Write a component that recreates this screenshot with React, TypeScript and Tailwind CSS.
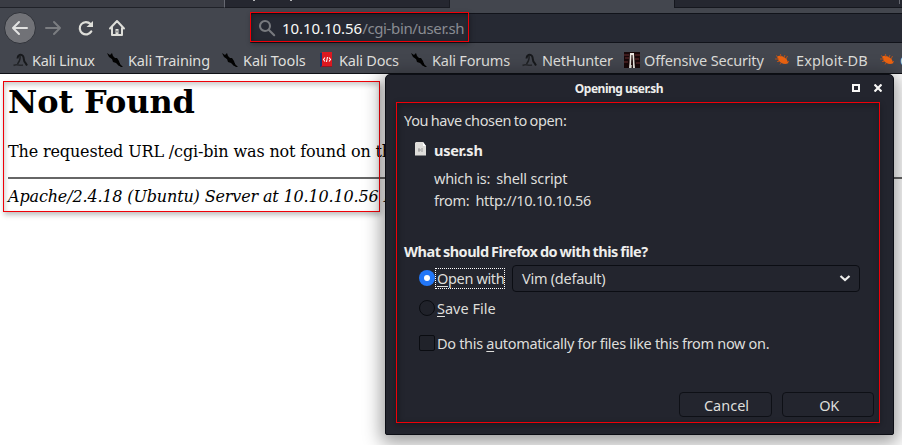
import React from "react";

const sans = "font-['Noto_Sans',sans-serif]";

function Dragon() {
  return (
    <svg className="block h-4 w-4" viewBox="0 0 16 16" fill="none">
      <path d="M4.5 6.5C4.5 3 8 1.500 10 4C11.500 6.500 10 9 12.500 11L14 13.500" stroke="#17191c" strokeWidth="2" />
      <path d="M7 3.500C7.500 7 6.500 9.500 4.500 12" stroke="#1e2023" strokeWidth="1.500" />
      <path d="M.5 13.500C4 11.500 6 14 10 13" stroke="#26282c" strokeWidth="1.500" />
    </svg>
  );
}
function Blade() {
  return (
    <svg className="block h-4 w-4" viewBox="0 0 16 16" fill="#020202">
      <path d="M0 1 3 3 5 1 6 4 8 6 10 6 12 9 13 12 16 15 14 15 11 13 9 11 6 10 5 7 2 5Z" />
      <path d="M10 11h3v3h-1ZM3 4h2v3Z" />
    </svg>
  );
}
function Docs() {
  return (
    <svg className="block h-4 w-4" viewBox="0 0 16 16">
      <path fill="#15346d" d="M1 1h2v14H1Z" />
      <path fill="#dc1820" d="M3 0h10v14H3Z" />
      <path fill="#8b1724" d="M2 14h11v1H2Z" />
      <path d="M6 5.500 4.500 7.500 6 9.500M10 5.500l1.500 2L10 9.500M8.500 5 7.500 10" stroke="#fff" strokeWidth="1.100" fill="none" />
    </svg>
  );
}
function Offensive() {
  return (
    <svg className="block h-4 w-4" viewBox="0 0 16 16">
      <path fill="#170708" d="M0 0h16v16H0Z" />
      <path stroke="#6b3033" d="M0 3h5M11 3h5M1 6h4M11 7h4M0 10h4M12 11h4" />
      <path fill="#e9e5df" d="M6 1h4l.5 10 .5 5H9L8.500 5 7.500 16H5l.5-5Z" />
      <path fill="#241010" d="M7.500 3h1l.5 10H7Z" />
    </svg>
  );
}
function Bug() {
  return (
    <svg className="block h-4 w-4" viewBox="0 0 16 16">
      <path fill="#ed6411" d="M2 4.500C5 2.500 9 4.500 11.500 7L13.500 11C10 13 6 11.500 3.500 8.500Z" />
      <path stroke="#b5521d" fill="none" d="M0 7h4M1 3.500l2 1.500M6 5 5.500 2M9 5.500 10 3M4 9.500H2M6 11l-1 1.500M11 7l1.500-3M12 9.500h2" />
    </svg>
  );
}

const bookmarks = [
  { icon: <Dragon />, label: "Kali Linux", item: "w-[94px]", pad: "gap-[3px]", track: "tracking-[-0.25px]" },
  { icon: <Blade />, label: "Kali Training", item: "w-[115px]", pad: "gap-[5px]", track: "tracking-[-0.15px]" },
  { icon: <Blade />, label: "Kali Tools", item: "w-[97px]", pad: "gap-[5px]", track: "tracking-[-0.1px]" },
  { icon: <Docs />, label: "Kali Docs", item: "w-[92px]", pad: "gap-[4px]", track: "tracking-[-0.2px]" },
  { icon: <Blade />, label: "Kali Forums", item: "w-[111px]", pad: "gap-[5px]", track: "tracking-[-0.2px]" },
  { icon: <Dragon />, label: "NetHunter", item: "w-[102px]", pad: "gap-[4px]", track: "tracking-[-0.2px]" },
  { icon: <Offensive />, label: "Offensive Security", item: "w-[151px]", pad: "gap-[4px]", track: "tracking-[-0.18px]" },
  { icon: <Bug />, label: "Exploit-DB", item: "w-[105px]", pad: "gap-[5px]", track: "tracking-[0.1px]" },
  { icon: <Bug />, label: "GHDB", item: "w-[80px]", pad: "gap-[4px]", track: "tracking-[-0.3px]" },
];

function Browser() {
  return (
    <header className={`${sans} flex h-[74px] flex-col overflow-hidden border-b border-[#0e1015] bg-[#43464e]`}>
      <div className="flex h-2 shrink-0">
        <div className="w-[224px] border-b border-[#202229] bg-[#3a3c44]" />
        <div className="flex w-[226px] border-r border-b border-l border-[#191b22] border-l-[#666871] bg-[#252730] pl-[28px]">
          <i className="h-px w-[2px] bg-[#b5b6b9]" />
          <i className="ml-[35px] h-px w-[2px] bg-[#b5b6b9]" />
        </div>
        <div className="w-[224px]" />
        <div className="flex flex-1 justify-end border-b border-l border-[#15171e] bg-[#252730] pr-[2px]">
          <i className="h-1 w-px bg-[#666871]" />
        </div>
      </div>
      <div className="flex h-[39px] shrink-0 items-center">
        <div className="flex w-[250px] items-center pl-1">
          <span className="flex h-8 w-8 items-center justify-center rounded-full border border-[#30333a] bg-[#717277]">
            <svg width="18" height="18" viewBox="0 0 18 18" fill="none" stroke="#e2e2e1" strokeWidth="2" strokeLinecap="round" strokeLinejoin="round"><path d="M16 9H2M8 3 2 9l6 6" /></svg>
          </span>
          <svg className="ml-2" width="18" height="18" viewBox="0 0 18 18" fill="none" stroke="#7b7d81" strokeWidth="2" strokeLinecap="round" strokeLinejoin="round"><path d="M2 9h14M10 3l6 6-6 6" /></svg>
          <svg className="ml-[15px]" width="18" height="18" viewBox="0 0 18 18" fill="none" stroke="#deded9" strokeWidth="2.2"><path d="M14.3 12.4A6.2 6.2 0 1 1 13.500 5" strokeLinecap="round" /><path d="M16 2v6H9.500Z" fill="#deded9" stroke="none" /></svg>
          <svg className="ml-[13px]" width="18" height="18" viewBox="0 0 18 18" fill="none" stroke="#deded9" strokeWidth="2" strokeLinecap="round" strokeLinejoin="round"><path d="M2 9.500 9 2l7 7.500M4 8.500V16h10V8.500" /><path d="M7.500 10h3v6h-3Z" fill="#deded9" stroke="none" /><path d="M9 12v1" stroke="#43464e" strokeWidth="1" /></svg>
        </div>
        <div className="flex h-[30px] flex-1 items-center rounded-l-[2px] border-y border-l border-[#11131a] bg-[#262933]">
          <svg className="ml-[7px]" width="18" height="18" viewBox="0 0 18 18" fill="none" stroke="#77797e" strokeWidth="2.1"><circle cx="7" cy="7" r="5" /><path d="m10.7 10.7 5.5 5.5" strokeLinecap="round" /></svg>
          <p className="ml-[6px] text-[15px] leading-5 tracking-[-0.05px] whitespace-nowrap text-[#8a8c92]"><span className="text-[#fafaf8]">10.10.10.56</span><span className="tracking-[-0.36px]">/cgi-bin/user.sh</span></p>
        </div>
      </div>
      <nav className="flex h-[25px] w-[960px] shrink-0 items-center pl-[13px]">
        {bookmarks.map((b) => (
          <div key={b.label} className={`flex shrink-0 items-center ${b.item} ${b.pad}`}>
            {b.icon}
            <span className={`text-[14.5px] leading-5 whitespace-nowrap text-[#dfdfdc] ${b.track}`}>{b.label}</span>
          </div>
        ))}
      </nav>
    </header>
  );
}

function Dialog() {
  return (
    <section className={`${sans} absolute top-[74px] left-[385px] flex h-[361px] w-[509px] flex-col rounded-t-[5px] rounded-b-[2px] border border-[#0c0e15] bg-[#23252e] text-[14.5px] leading-5 text-[#dededb] shadow-[0_4px_18px_4px_rgba(0,0,0,0.38)]`}>
      <div className="flex h-[27px] shrink-0 items-center">
        <h2 className="w-[466px] text-center text-[12px] font-bold tracking-[-0.5px] text-[#eeeeec]">Opening user.sh</h2>
        <svg className="-mt-px" width="8" height="8" viewBox="0 0 8 8" fill="none" stroke="#f7f7f5" strokeWidth="2"><path d="M1 1h6v6H1Z" /></svg>
        <svg className="-mt-px ml-[14px]" width="8" height="8" viewBox="0 0 8 8" stroke="#f7f7f5" strokeWidth="2.2"><path d="m.5.5 7 7M7.500.5l-7 7" /></svg>
      </div>
      <div className="ml-[10px] flex h-[321px] w-[484px] flex-col border border-[#f00008] pl-[7px] shadow-[0_2px_6px_rgba(0,0,0,0.3),inset_1px_2px_6px_rgba(0,0,0,0.3)]">
        <p className="mt-[7px] tracking-[-0.35px] [word-spacing:-0.9px]">You have chosen to open:</p>
        <div className="mt-[10px] flex h-5 items-center">
          <svg className="-mt-[3px] ml-[11px]" width="12" height="14" viewBox="0 0 12 14"><path fill="#deddda" d="M1 0h7l3 4v9.5H0V1Z" /><path d="M3 8h3M7 6v4M4 6v4" stroke="#999" /><path fill="#fff" d="M8 0v4h3Z" /></svg>
          <b className="ml-[7px] tracking-[-0.25px] text-[#eeeeec]">user.sh</b>
        </div>
        <p className="mt-[8px] ml-[30px] tracking-[-0.25px]">which is:<span className="ml-[6px] tracking-[-0.15px]">shell script</span></p>
        <p className="mt-[2px] ml-[30px] tracking-[-0.3px]">from:<span className="ml-[6px]">http://10.10.10.56</span></p>
        <b className="mt-[31px] tracking-[-0.5px] [word-spacing:-0.8px] text-[#eeeeec]">What should Firefox do with this file?</b>
        <div className="mt-[4px] flex h-[26px] items-center pl-[15px]">
          <span className="flex h-4 w-4 items-center justify-center rounded-full bg-[#2277f8]"><i className="h-[6px] w-[6px] rounded-full bg-white" /></span>
          <span className="flex h-[21px] w-[70px] items-center border border-dotted border-white pl-px tracking-[-0.35px] whitespace-pre"><span className="underline underline-offset-2">O</span>pen with</span>
          <div className="ml-[7px] flex h-[27px] w-[348px] items-center justify-between rounded-[4px] border border-[#0b0d13] pr-[8px] pl-[9px]">
            <span className="tracking-[-0.25px]">Vim (default)</span>
            <svg width="12" height="9" viewBox="0 0 12 9" fill="none" stroke="#eeeeec" strokeWidth="2.2"><path d="m1.500 2 4.500 4 4.500-4" /></svg>
          </div>
        </div>
        <div className="mt-[7px] flex h-5 items-center pl-[15px]">
          <span className="h-4 w-4 rounded-full border border-[#0a0c11] bg-[#20222a]" />
          <span className="ml-[2px]"><span className="underline underline-offset-2">S</span>ave File</span>
        </div>
        <div className="mt-[15px] flex h-5 items-center pl-[15px]">
          <span className="h-4 w-4 rounded-[2px] border border-[#0a0c11] bg-[#20222a]" />
          <span className="ml-[2px] tracking-[-0.31px]">Do this <span className="underline underline-offset-2">a</span>utomatically for files like this from now on.</span>
        </div>
        <div className="mt-[39px] flex gap-[10px] pl-[275px]">
          <button className="h-[25px] w-[93px] rounded-[4px] border border-[#0e1016] pl-[2px] leading-5">Cancel</button>
          <button className="h-[25px] w-[92px] rounded-[4px] border border-[#0e1016] pl-[2px] leading-5 tracking-[-0.3px]">OK</button>
        </div>
      </div>
    </section>
  );
}

export default function App() {
  return (
    <div className="relative h-[445px] w-[902px] overflow-hidden bg-white">
      <Browser />
      <main className="pt-[9px] pl-2 font-['DejaVu_Serif',serif] text-[16px] text-black">
        <h1 className="text-[32px] leading-[38px] font-bold tracking-[-0.1px]">Not Found</h1>
        <p className="mt-[21px] leading-[19px] tracking-[-0.14px] whitespace-nowrap">The requested URL /cgi-bin was not found on this server.</p>
        <hr className="mt-[16px] h-[2px] border-0 bg-[#666]" />
        <address className="mt-[8px] leading-[19px] tracking-[-0.15px] italic">Apache/2.4.18 (Ubuntu) Server at 10.10.10.56 Port 80</address>
      </main>
      <div className="absolute top-[81px] left-[3px] h-[131px] w-[377px] border border-[#f00008] shadow-[1px_3px_5px_rgba(0,0,0,0.25),inset_1px_3px_5px_rgba(0,0,0,0.2)]" />
      <div className="absolute top-[12px] left-[250px] h-[30px] w-[219px] border border-[#f00008] shadow-[1px_2px_5px_rgba(0,0,0,0.3),inset_1px_2px_5px_rgba(0,0,0,0.3)]" />
      <Dialog />
    </div>
  );
}
